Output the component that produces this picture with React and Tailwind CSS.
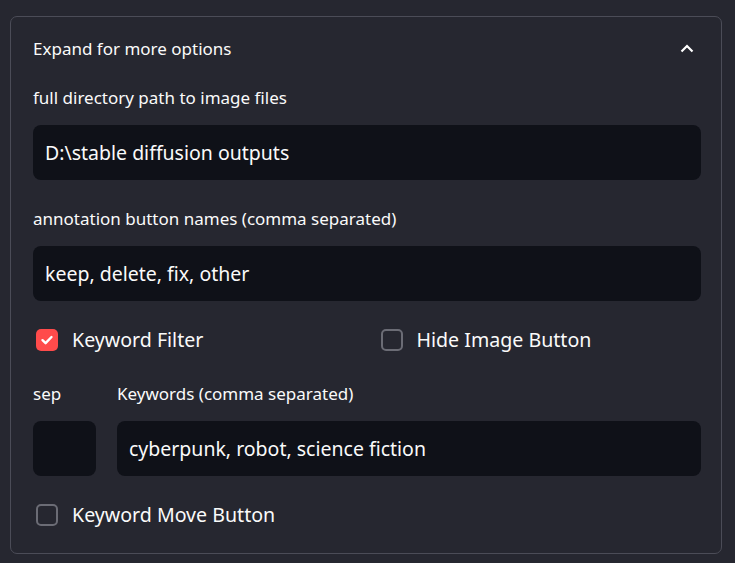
import React from 'react';

function Check({ checked, label }) {
  return (
    <label className="flex items-center gap-[14px] h-[24px]">
      {checked ? (
        <span className="w-[22px] h-[22px] rounded-[5px] bg-[#ff4b4b] flex items-center justify-center ml-[3px]">
          <svg width="14" height="14" viewBox="0 0 14 14" fill="none">
            <path d="M2.5 7.2 L5.6 10.2 L11.5 4" stroke="white" strokeWidth="2.4" strokeLinecap="round" strokeLinejoin="round" />
          </svg>
        </span>
      ) : (
        <span className="w-[22px] h-[22px] rounded-[5px] border-2 border-[#6b6c75] ml-[3px]" />
      )}
      <span className="text-[19.6px] text-[#fafafa]">{label}</span>
    </label>
  );
}

function Field({ label, value, className = '' }) {
  return (
    <div className={className}>
      <div className="text-[17px] text-[#fafafa] h-[20px] leading-[20px] mb-[17px]">{label}</div>
      <div className="h-[55px] rounded-[8px] bg-[#0f1118] flex items-center px-[12px] text-[19.5px] text-[#fafafa]">
        {value}
      </div>
    </div>
  );
}

export default function App() {
  return (
    <div className="min-h-[563px] bg-[#262730] pt-[16px] pl-[10px] pr-[13px]" style={{ fontFamily: '"Source Sans Pro", "Noto Sans", sans-serif' }}>
      <div className="border border-[#4b4c57] rounded-[7px] h-[538px] pl-[22px] pr-[20px]">
        <div className="flex items-center justify-between h-[64px] pb-[1px]">
          <span className="text-[17px] text-[#fafafa]">Expand for more options</span>
          <svg width="14" height="10" viewBox="0 0 14 10" fill="none" className="mr-[7px]">
            <path d="M1.5 7.5 L7 2 L12.5 7.5" stroke="white" strokeWidth="2.2" />
          </svg>
        </div>
        <div className="flex flex-col gap-[29px] pt-[7px]">
          <Field label="full directory path to image files" value="D:\stable diffusion outputs" />
          <Field label="annotation button names (comma separated)" value="keep, delete, fix, other" />
        </div>
        <div className="grid grid-cols-2 gap-[21px] mt-[27px]">
          <Check checked label="Keyword Filter" />
          <Check label="Hide Image Button" />
        </div>
        <div className="grid grid-cols-[63px_1fr] gap-[21px] mt-[32px]">
          <Field label="sep" value="" />
          <Field label="Keywords (comma separated)" value="cyberpunk, robot, science fiction" />
        </div>
        <div className="mt-[27px]">
          <Check label="Keyword Move Button" />
        </div>
      </div>
    </div>
  );
}
